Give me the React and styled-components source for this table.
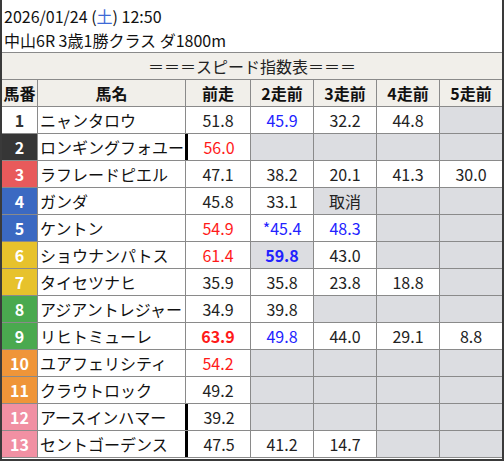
import React from "react";
import styled, { createGlobalStyle } from "styled-components";

const GlobalStyle = createGlobalStyle`
  body {
    margin: 0;
    background: #ffffff;
    font-family: "Noto Sans CJK JP", "Noto Sans", sans-serif;
  }
`;

const Frame = styled.div`
  width: 504px;
  height: 461px;
  box-sizing: border-box;
  border-left: 2px solid #3a3a3a;
  border-right: 2px solid #3a3a3a;
  border-bottom: 2px solid #3a3a3a;
  background: #ffffff;
  overflow: hidden;
`;

const RaceInfo = styled.div`
  height: 52px;
  padding: 4px 0 0 2px;
  box-sizing: border-box;
  color: #111;
  font-size: 16px;
  line-height: 24px;
`;

const Weekday = styled.span`
  color: #3d6ad6;
`;

const Grid = styled.div`
  display: grid;
  grid-template-columns: 35px 147px 64px 62px 62px 62px 62px;
  grid-auto-rows: 26px;
  gap: 1px;
  background: #8a8a8a;
  border-top: 1px solid #8a8a8a;
  padding-bottom: 1px;
`;

const Title = styled.div`
  grid-column: 1 / -1;
  background: #f1efea;
  display: flex;
  align-items: center;
  justify-content: center;
  font-size: 16px;
  color: #222;
`;

const HeadCell = styled.div`
  background: #f1efea;
  display: flex;
  align-items: center;
  justify-content: center;
  font-size: 16px;
  font-weight: bold;
  color: #111;
`;

const frameColors = {
  1: ["#ffffff", "#333"],
  2: ["#363636", "#fff"],
  3: ["#e85a5b", "#fff"],
  4: ["#3b69c2", "#fff"],
  5: ["#3b69c2", "#fff"],
  6: ["#e7c22c", "#fff"],
  7: ["#e7c22c", "#fff"],
  8: ["#4aa94f", "#fff"],
  9: ["#4aa94f", "#fff"],
  10: ["#ef9539", "#fff"],
  11: ["#ef9539", "#fff"],
  12: ["#f190a3", "#fff"],
  13: ["#f190a3", "#fff"],
};

const NumCell = styled.div`
  background: ${(p) => p.$bg};
  color: ${(p) => p.$fg};
  display: flex;
  align-items: center;
  justify-content: center;
  font-size: 16px;
  font-weight: bold;
`;

const NameCell = styled.div`
  background: #ffffff;
  display: flex;
  align-items: center;
  padding-left: 2px;
  font-size: 16px;
  color: #111;
  white-space: nowrap;
  overflow: hidden;
`;

const textColors = { r: "#ff1a1a", b: "#2222ff" };

const Score = styled.div`
  background: ${(p) => (p.$empty || p.$gray ? "#dcdde1" : "#ffffff")};
  color: ${(p) => textColors[p.$tone] || "#222"};
  font-weight: ${(p) => (p.$bold ? "bold" : "normal")};
  display: flex;
  align-items: center;
  justify-content: center;
  font-size: 16px;
  box-sizing: border-box;
  border-left: ${(p) => (p.$mark ? "3px solid #000" : "none")};
  margin-left: ${(p) => (p.$mark ? "-1px" : "0")};
`;

// v: value, t: tone (r/b), b: bold, g: gray background
const horses = [
  { n: 1, name: "ニャンタロウ", s: [{ v: "51.8" }, { v: "45.9", t: "b" }, { v: "32.2" }, { v: "44.8" }, null] },
  { n: 2, name: "ロンギングフォユー", mark: true, s: [{ v: "56.0", t: "r" }, null, null, null, null] },
  { n: 3, name: "ラフレードピエル", s: [{ v: "47.1" }, { v: "38.2" }, { v: "20.1" }, { v: "41.3" }, { v: "30.0" }] },
  { n: 4, name: "ガンダ", s: [{ v: "45.8" }, { v: "33.1" }, { v: "取消", g: true }, null, null] },
  { n: 5, name: "ケントン", s: [{ v: "54.9", t: "r" }, { v: "*45.4", t: "b" }, { v: "48.3", t: "b" }, null, null] },
  { n: 6, name: "ショウナンパトス", s: [{ v: "61.4", t: "r" }, { v: "59.8", t: "b", b: true, g: true }, { v: "43.0" }, null, null] },
  { n: 7, name: "タイセツナヒ", s: [{ v: "35.9" }, { v: "35.8" }, { v: "23.8" }, { v: "18.8" }, null] },
  { n: 8, name: "アジアントレジャー", s: [{ v: "34.9" }, { v: "39.8" }, null, null, null] },
  { n: 9, name: "リヒトミューレ", s: [{ v: "63.9", t: "r", b: true }, { v: "49.8", t: "b" }, { v: "44.0" }, { v: "29.1" }, { v: "8.8" }] },
  { n: 10, name: "ユアフェリシティ", s: [{ v: "54.2", t: "r" }, null, null, null, null] },
  { n: 11, name: "クラウトロック", s: [{ v: "49.2" }, null, null, null, null] },
  { n: 12, name: "アースインハマー", mark: true, s: [{ v: "39.2" }, null, null, null, null] },
  { n: 13, name: "セントゴーデンス", mark: true, s: [{ v: "47.5" }, { v: "41.2" }, { v: "14.7" }, null, null] },
];

const headers = ["馬番", "馬名", "前走", "2走前", "3走前", "4走前", "5走前"];

export default function App() {
  return (
    <>
      <GlobalStyle />
      <Frame>
        <RaceInfo>
          <div>
            2026/01/24 (<Weekday>土</Weekday>) 12:50
          </div>
          <div>中山6R 3歳1勝クラス ダ1800m</div>
        </RaceInfo>

        <Grid>
          <Title>＝＝＝スピード指数表＝＝＝</Title>
          {headers.map((h) => (
            <HeadCell key={h}>{h}</HeadCell>
          ))}

          {horses.map((horse) => (
            <React.Fragment key={horse.n}>
              <NumCell $bg={frameColors[horse.n][0]} $fg={frameColors[horse.n][1]}>
                {horse.n}
              </NumCell>
              <NameCell>{horse.name}</NameCell>
              {horse.s.map((s, i) => (
                <Score
                  key={i}
                  $empty={!s}
                  $gray={s && s.g}
                  $tone={s && s.t}
                  $bold={s && s.b}
                  $mark={i === 0 && horse.mark}
                >
                  {s ? s.v : ""}
                </Score>
              ))}
            </React.Fragment>
          ))}
        </Grid>
      </Frame>
    </>
  );
}
